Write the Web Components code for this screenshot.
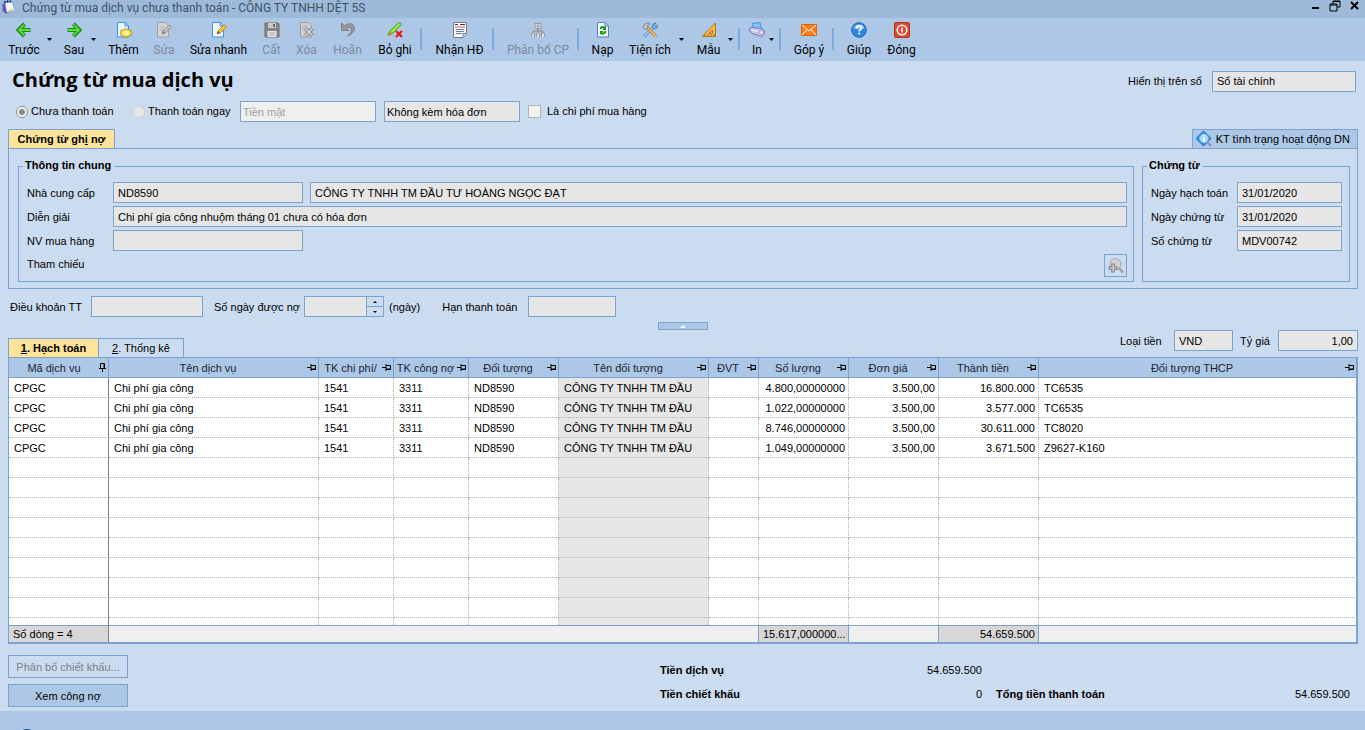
<!DOCTYPE html>
<html lang="vi">
<head>
<meta charset="utf-8">
<title>Chứng từ mua dịch vụ</title>
<style>
  html, body { margin: 0; }
  body {
    --line: #7ba2d0;
    --bar: #adc7e7;
    --page: #cbdbf0;
    --field: #e6e6e6;
    --ui: Roboto, "Open Sans", sans-serif;
    --head: "Open Sans", "Noto Sans", sans-serif;
    background: var(--page);
    color: #000;
    font: 11px/14px "Liberation Sans", Arial, sans-serif;
  }
</style>
</head>
<body>
<voucher-app></voucher-app>

<script>
const ICONS = {
  app: '<path d="M3 1h9l3 11-10 3L1 12z" fill="#3b5fc4"/><path d="M4 3l8-1 3 10-9 2z" fill="#f2f6ff" stroke="#8fa6d8" stroke-width=".6"/><path d="M1 5l3 9 2 1" stroke="#8a3fa8" stroke-width="1.4" fill="none"/><path d="M4 1v3M7 0v3M10 0v3" stroke="#223a80" stroke-width="1.2"/><path d="M8 11l4-1 1 2-4 1z" fill="#f3d36b"/>',
  back: '<path d="M14.500 8H3M8.500 2L2.500 8l6 6" fill="none" stroke="#158a18" stroke-width="4"/><path d="M14 8H3M8.300 2.600L3 8l5.300 5.400" fill="none" stroke="#5fdc36" stroke-width="1.800"/>',
  next: '<path d="M1.500 8H13M7.500 2l6 6-6 6" fill="none" stroke="#158a18" stroke-width="4"/><path d="M2 8h11M7.700 2.600L13 8l-5.300 5.400" fill="none" stroke="#5fdc36" stroke-width="1.800"/>',
  add: '<path d="M1.500.5h8l3 3V15h-11z" fill="#e8f4ff" stroke="#3f95dc"/><path d="M9 .5V4h3.500" fill="#a9d3f7" stroke="#3f95dc"/><path d="M5 8l2 .5L8 7h4l1 1.500L15 8v2l1 1-1 1v2l-2-.5L12 15H8l-1-1.500L5 14v-2l-1-1 1-1z" fill="#f7e04b" stroke="#b08a10" stroke-width=".8"/><ellipse cx="10" cy="11" rx="3" ry="2" fill="#fff59a"/>',
  edit: '<path d="M1.500.5h8l3 3V15h-11z" fill="#d4d4d4" stroke="#a0a0a0"/><path d="M3.500 5h5M3.500 8h4" stroke="#b0b0b0"/><path d="M6 12l1-3 6-6 2.500 2-6.500 6z" fill="#c4c4c4" stroke="#8c8c8c"/><path d="M6 12l1-3 2 2z" fill="#777"/>',
  quick: '<path d="M1.500.5h8l3 3V15h-11z" fill="#eef7ff" stroke="#3f95dc"/><path d="M9 .5V4h3.500" fill="#a9d3f7" stroke="#3f95dc"/><path d="M6 12l1-3 6-6 2.500 2-6.500 6z" fill="#f9c63a" stroke="#c08016"/><path d="M6 12l1-3 2 2z" fill="#5a6a7a"/>',
  save: '<path d="M1 1h13l1 1v13H1z" fill="#858585" stroke="#6d6d6d"/><path d="M4 1h8v5H4z" fill="#c9c9c9"/><path d="M9 2h2v3H9z" fill="#6d6d6d"/><path d="M3.500 9h9v6h-9z" fill="#e6e6e6"/><path d="M5 11h6M5 13h6" stroke="#aaa"/>',
  del: '<path d="M1.500.5h8l3 3V15h-11z" fill="#cfcfcf" stroke="#a0a0a0"/><path d="M3 4h5M3 7h3" stroke="#aaa"/><path d="M6.500 6.500l7 7M13.500 6.500l-7 7" stroke="#777" stroke-width="3.600"/><path d="M6.500 6.500l7 7M13.500 6.500l-7 7" stroke="#d0d0d0" stroke-width="1.800"/>',
  undo: '<path d="M1.500 1v7.500H9L6.500 6c3-1.500 6 0 4.500 3.500-.6 1.700-1.800 3-3.500 4.500 4.500-1.500 7.500-5 7-8.500C14 1 8 .5 4.500 3.800z" fill="#979797" stroke="#777" stroke-width=".8"/>',
  unpost: '<path d="M1 13l2-4L11.500.8q2-.6 3 1.600L6 11z" fill="#9be34b" stroke="#4c9e1a"/><path d="M.5 14l2.500-4.500L6 12z" fill="#c98a1d"/><path d="M9 9l6 6M15 9l-6 6" stroke="#f01010" stroke-width="2"/>',
  invoice: '<path d="M1.500.5h13v11l-3 4h-10z" fill="#fbfbfd" stroke="#7a7a86"/><path d="M3 2.500h3M8 2.500h5" stroke="#333"/><path d="M3 5h10" stroke="#e2896f" stroke-width="1.400"/><path d="M4 7.500h8M4 9.500h8M4 11.500h6" stroke="#5a7fb8"/><path d="M11 15v-3.500h3.500" fill="#ddd" stroke="#7a7a86"/>',
  split: '<path d="M5 1.500h6v5H5z" fill="#ddd" stroke="#999"/><path d="M8 2.500v3M6.500 4h3M8 7v3M3 11V9h10v2" stroke="#8a8a8a" fill="none"/><path d="M1.500 15v-4h3v4M6.500 15v-4h3v4M11.500 15v-4h3v4" fill="#ddd" stroke="#999"/>',
  reload: '<path d="M2.500.5h8l3 3V15h-11z" fill="#f3f8ff" stroke="#5b7fc0"/><path d="M10 .5V4h3.500" fill="#b9d0f2" stroke="#5b7fc0"/><path d="M5 7V5q3-2 5 0l1-1v4H7.500l1-1.500Q7 5.500 6.500 7z" fill="#129b12"/><path d="M11 9v2q-3 3-5 .8L5 13V9h3.500l-1 1.500q1.500.8 2-1.500z" fill="#129b12"/>',
  tools: '<path d="M2 14.500L12 5" stroke="#3f87cf" stroke-width="3"/><path d="M2 14.500L12 5" stroke="#a9d5fb" stroke-width="1.500"/><path d="M10 5l1-3 3-1-1.500 2 1 1.500L15.500 3l-.5 3-3 1z" fill="#7cbcf2" stroke="#2f6fb0" stroke-width=".7"/><path d="M5 5l9 9.500" stroke="#c57b1c" stroke-width="3"/><path d="M5 5l9 9.500" stroke="#f4c263" stroke-width="1.400"/><path d="M1 6l1-3.500L6 .8l2 1L5 4l1 2-2 1.500z" fill="#c4c4c4" stroke="#777" stroke-width=".8"/>',
  ruler: '<path d="M14.500 1v13.500H1z" fill="#f3ba48" stroke="#b27a14"/><path d="M11.500 8v3.500H8z" fill="#adc7e7" stroke="#b27a14"/><path d="M4 14v-2M7 14v-1.500M10 14v-1.500M13 14v-2" stroke="#7a4f05" stroke-width=".8"/>',
  print: '<path d="M3 1.500l8-1 1.500 6-8 1z" fill="#7cc4f2" stroke="#3c87c8" stroke-width=".8"/><path d="M.6 7q0-2 3-1.500l9 1q2.800.5 2.800 3.500T13 14.500q-2 0-5-1.500-5-1-6.800-3z" fill="#c6c2ec" stroke="#6f6bab" stroke-width=".9"/><path d="M2.500 8l6 1.500" stroke="#fff"/><circle cx="12.500" cy="10.500" r="2" fill="#e8e6fb" stroke="#8b87c4" stroke-width=".7"/>',
  mail: '<path d="M.5 2.500h15v11H.5z" fill="#f57c17" stroke="#e06400"/><path d="M1 3l7 6 7-6M1 13l5-5.500M15 13l-5-5.500" fill="none" stroke="#fff"/>',
  help: '<circle cx="8" cy="8" r="7.300" fill="#2f86df" stroke="#1d5fae"/><path d="M2.500 6a5.800 5 0 0 1 11 0q-5 3-11 0z" fill="#8fc6fa"/><path d="M5.800 6.200q0-2.400 2.300-2.400T10.400 6q0 1.200-1.200 1.800-1 .6-1 1.600" fill="none" stroke="#fff" stroke-width="1.500"/><circle cx="8.200" cy="11.600" r="1" fill="#fff"/>',
  close: '<rect x=".5" y=".5" width="15" height="15" rx="1.500" fill="#e0492f" stroke="#b5311c"/><circle cx="8" cy="8" r="4.800" fill="none" stroke="#fff" stroke-width="1.500"/><path d="M8 5.500v5" stroke="#fff" stroke-width="1.500"/>',
  check: '<path d="M7.500 0L15 7.500 7.500 15 0 7.500z" fill="#2a98e6" stroke="#1b74bd"/><circle cx="8" cy="7.500" r="4.200" fill="#a8dafa" stroke="#8fcdf6"/><path d="M8 6.500v4M8 4.200v1.400" stroke="#fff" stroke-width="1.800"/><path d="M11 11l4 4" stroke="#9a8ac8" stroke-width="2.200"/>',
  zoom: '<circle cx="7.500" cy="6" r="5.500" fill="#d2d2d2" stroke="#a6a6a6"/><path d="M11 10l4 4.500" stroke="#a0a0a0" stroke-width="2.600"/><path d="M5 5.500v9M.5 10h9" stroke="#858585" stroke-width="3.600"/><path d="M5 6.500v7M1.500 10h7" stroke="#cacaca" stroke-width="1.600"/>'
};
const svg = name => `<svg width="16" height="16" viewBox="0 0 16 16" aria-hidden="true">${ICONS[name]}</svg>`;

const BASE = `
  *, *::before, *::after { box-sizing: border-box; }
  button, input, select { font: inherit; color: inherit; margin: 0; border-radius: 0; }
  button { padding: 0; background: none; border: 0; white-space: nowrap; }
  svg { display: block; flex: none; }
`;

class Base extends HTMLElement {
  connectedCallback() {
    if (this.shadowRoot) return;
    this.attachShadow({ mode: 'open' }).innerHTML = `<style>${BASE}</style>${this.render()}`;
  }
}

customElements.define('title-bar', class extends Base {
  render() {
    return `<style>
      :host { display: flex; align-items: flex-start; justify-content: space-between; height: 18px;
              background: #9dbad9; color: #3f5269; font: 12px/16px var(--ui); }
      .name { display: flex; gap: 6px; white-space: nowrap; }
      .name svg { width: 15px; height: 14px; margin-left: 1px; }
      .ctl { display: flex; gap: 8px; padding-right: 4px; }
      .ctl button { width: 12px; height: 12px; }
    </style>
    <div class="name">${svg('app')}<span><slot></slot></span></div>
    <div class="ctl">
      <button aria-label="Thu nhỏ"><svg width="12" height="12"><path d="M3 8h7" stroke="#000" stroke-width="2"/></svg></button>
      <button aria-label="Khôi phục"><svg width="12" height="12"><path d="M4 4V1h7v6H8M4 1.500h7M1 4h7v7H1zM1 5h7" fill="none" stroke="#000"/></svg></button>
      <button aria-label="Đóng cửa sổ"><svg width="12" height="12"><path d="M2 2l7 7M9 2l-7 7" stroke="#000" stroke-width="2"/></svg></button>
    </div>`;
  }
});

customElements.define('tool-item', class extends Base {
  render() {
    const off = this.hasAttribute('disabled') ? 'disabled' : '';
    return `<style>
      :host { display: flex; flex: none; }
      button { display: flex; flex-direction: column; align-items: center; gap: 4px;
               width: var(--w, 45px); padding-top: 4px; }
      button:disabled { color: #7e8a99; }
      .more { width: 10px; padding: 20px 0 0; align-items: flex-start; }
    </style>
    <button ${off}>${svg(this.getAttribute('icon'))}<span><slot></slot></span></button>
    ${this.hasAttribute('menu') ? '<button class="more" aria-label="Mở trình đơn"><svg width="5" height="3"><path d="M0 0h5L2.500 3z"/></svg></button>' : ''}`;
  }
});

customElements.define('tool-bar', class extends Base {
  render() {
    const item = (icon, label, w, extra = '') => `<tool-item icon="${icon}" ${extra} style="--w:${w}px">${label}</tool-item>`;
    return `<style>
      :host { display: flex; height: 43px; padding-left: 1px; background: var(--bar);
              font: 12px/16px var(--ui); }
      i { flex: none; width: 7px; height: 22px; margin-top: 10px; border-left: 2px solid #80aadd; }
    </style>
    ${item('back', 'Trước', 46, 'menu')}${item('next', 'Sau', 34, 'menu')}${item('add', 'Thêm', 45)}
    ${item('edit', 'Sửa', 36, 'disabled')}${item('quick', 'Sửa nhanh', 73)}${item('save', 'Cất', 33, 'disabled')}
    ${item('del', 'Xóa', 37, 'disabled')}${item('undo', 'Hoãn', 45, 'disabled')}${item('unpost', 'Bỏ ghi', 50)}<i></i>
    ${item('invoice', 'Nhận HĐ', 65)}<i></i>${item('split', 'Phân bổ CP', 78, 'disabled')}<i></i>
    ${item('reload', 'Nạp', 37)}${item('tools', 'Tiện ích', 58, 'menu')}${item('ruler', 'Mẫu', 39, 'menu')}<i></i>
    ${item('print', 'In', 24, 'menu')}<i></i>${item('mail', 'Góp ý', 46)}<i></i>
    ${item('help', 'Giúp', 40)}${item('close', 'Đóng', 45)}`;
  }
});

/* A label and its box. --lw: label column, --bw: box width, kind: text | select */
customElements.define('form-field', class extends Base {
  render() {
    const value = this.getAttribute('value') || '';
    const label = this.getAttribute('label') || '';
    const hidden = this.getAttribute('hint') || '';
    const off = this.hasAttribute('disabled') ? 'disabled' : '';
    const aria = hidden ? `aria-label="${hidden}"` : '';
    const box = this.getAttribute('kind') === 'select'
      ? `<select id="f" ${aria} ${off}><option>${value}</option></select>`
      : `<input id="f" type="text" ${aria} value="${value}" readonly>`;
    return `<style>
      :host { display: flex; align-items: center; height: 21px; }
      label { flex: none; width: var(--lw, auto); white-space: nowrap; }
      input, select { appearance: none; flex: 1 1 auto; min-width: 0; width: var(--bw, 100%); height: 21px; padding: 0 4px;
        border: 1px solid var(--line); background: var(--field); outline: 0; text-align: var(--align, left); }
      :host([fixed]) input, :host([fixed]) select { flex: none; }
      :host([tight]) select { padding-left: 2px; }
      select:disabled { color: #a0a0a0; background: #efefef; opacity: 1; }
    </style>${label ? `<label for="f">${label}</label>` : ''}${box}`;
  }
});

customElements.define('spin-field', class extends Base {
  render() {
    return `<style>
      :host { display: flex; align-items: center; height: 21px; }
      label { width: 90px; }
      .box { display: flex; width: 80px; height: 21px; border: 1px solid var(--line); background: var(--field); }
      input { flex: 1; min-width: 0; border: 0; background: none; outline: 0; }
      .btns { display: flex; flex-direction: column; width: 17px; }
      .btns button { flex: 1; display: grid; place-items: center; background: var(--page); border-left: 1px solid var(--line); }
      .btns button + button { border-top: 1px solid var(--line); }
    </style>
    <label for="d">Số ngày được nợ</label>
    <div class="box"><input id="d" type="text" readonly>
      <div class="btns"><button aria-label="Tăng"><svg width="4" height="2"><path d="M0 2h4L2 0z"/></svg></button><button aria-label="Giảm"><svg width="4" height="2"><path d="M0 0h4L2 2z"/></svg></button></div>
    </div>`;
  }
});

customElements.define('group-box', class extends Base {
  render() {
    return `<style>
      :host { display: block; min-width: 0; }
      fieldset { margin: 0; min-width: 0; height: 100%; border: 1px solid var(--line); padding: 9px var(--pr, 6px) 4px 8px; }
      legend { margin-left: -4px; padding: 0 3px 0 2px; font-weight: bold; height: 14px; line-height: 12px; }
      div { display: flex; flex-direction: column; gap: 3px; }
    </style>
    <fieldset><legend>${this.getAttribute('legend')}</legend><div><slot></slot></div></fieldset>`;
  }
});

customElements.define('voucher-head', class extends Base {
  render() {
    return `<style>
      :host { display: block; padding: 0 9px 0 12px; }
      .top { display: flex; justify-content: space-between; align-items: center; height: 40px; }
      h1 { align-self: flex-start; margin: 0; font: bold 20px/38px var(--head); }
      .opts { display: flex; align-items: center; height: 21px; padding-left: 4px; }
      label { white-space: nowrap; line-height: 13px; }
      .a { width: 105px; padding-left: 3px; } .b { width: 95px; padding-left: 3px; }
      input { appearance: none; flex: none; width: 13px; height: 13px; border: 1px solid #b4b4b4; background: #f2f2f2; }
      input[type=radio] { width: 12px; height: 12px; border-radius: 50%; }
      input[type=radio]:checked { border-color: #8e8e8e; background: radial-gradient(circle, #888 0 2px, #b4b4b4 3px, #fff 4px); }
      input[type=radio]:not(:checked) { border-color: #d0d0d0; background: #e8e8e8; }
      form-field + form-field { margin: 0 8px; }
      .c { padding-left: 6px; }
    </style>
    <div class="top"><h1>Chứng từ mua dịch vụ</h1>
      <form-field fixed kind="select" label="Hiển thị trên sổ" value="Sổ tài chính" style="--lw:84px;--bw:144px"></form-field></div>
    <div class="opts">
      <input type="radio" id="r1" name="pay" checked disabled><label class="a" for="r1">Chưa thanh toán</label>
      <input type="radio" id="r2" name="pay" disabled><label class="b" for="r2">Thanh toán ngay</label>
      <form-field fixed tight kind="select" hint="Phương thức" value="Tiền mặt" disabled style="--bw:136px"></form-field>
      <form-field fixed tight kind="select" hint="Hóa đơn" value="Không kèm hóa đơn" style="--bw:136px"></form-field>
      <input type="checkbox" id="c1" disabled><label class="c" for="c1">Là chi phí mua hàng</label>
    </div>`;
  }
});

customElements.define('debit-panel', class extends Base {
  render() {
    return `<style>
      :host { display: block; margin: 7px 7px 0 8px; }
      .tabs { display: flex; justify-content: space-between; height: 19px; }
      .tabs button { height: 20px; border: 1px solid var(--line); }
      .on { width: 107px; background: #ffe39b; border-bottom-color: #ffe39b; font-weight: bold; z-index: 1; }
      .kt { display: flex; align-items: center; gap: 4px; padding: 0 7px 0 3px; background: var(--bar); }
      .panel { display: grid; grid-template-columns: 1fr 208px; gap: 8px; padding: 10px 7px 6px 9px; border: 1px solid var(--line); }
      form-field { --lw: 86px; }
      .pair { display: flex; gap: 7px; }
      .pair form-field:last-child { flex: 1; }
      .ref { display: flex; justify-content: space-between; height: 23px; line-height: 21px; }
      .ref button { display: grid; place-items: center; width: 23px; height: 23px; border: 1px solid var(--line); }
    </style>
    <div class="tabs" role="tablist"><button class="on" role="tab">Chứng từ gh<u>i</u> nợ</button>
      <button class="kt">${svg('check')}KT tình trạng hoạt động DN</button></div>
    <div class="panel">
      <group-box legend="Thông tin chung">
        <div class="pair"><form-field fixed label="Nhà cung cấp" value="ND8590" style="--bw:190px"></form-field>
          <form-field hint="Tên nhà cung cấp" value="CÔNG TY TNHH TM ĐẦU TƯ HOÀNG NGỌC ĐẠT"></form-field></div>
        <form-field label="Diễn giải" value="Chi phí gia công nhuộm tháng 01 chưa có hóa đơn"></form-field>
        <form-field fixed label="NV mua hàng" style="--bw:190px"></form-field>
        <div class="ref"><span>Tham chiếu</span><button aria-label="Tìm tham chiếu">${svg('zoom')}</button></div>
      </group-box>
      <group-box legend="Chứng từ" style="--pr:7px">
        <form-field label="Ngày hạch toán" value="31/01/2020"></form-field>
        <form-field label="Ngày chứng từ" value="31/01/2020"></form-field>
        <form-field label="Số chứng từ" value="MDV00742"></form-field>
      </group-box>
    </div>`;
  }
});

customElements.define('terms-row', class extends Base {
  render() {
    return `<style>
      :host { display: block; padding: 7px 9px 0; }
      .row { display: flex; align-items: center; gap: 11px; padding-left: 1px; }
      .unit { margin: 0 11px 0 -6px; }
      .fold { display: grid; place-items: center; width: 50px; height: 8px; margin: 5px auto 0; background: var(--bar); border: 1px solid var(--line); }
    </style>
    <div class="row">
      <form-field fixed label="Điều khoản TT" style="--lw:81px;--bw:112px"></form-field>
      <spin-field></spin-field><span class="unit">(ngày)</span>
      <form-field fixed label="Hạn thanh toán" style="--lw:86px;--bw:88px"></form-field>
    </div>
    <button class="fold" aria-label="Thu gọn"><svg width="6" height="3"><path d="M0 3h6L3 0z" fill="#fff"/></svg></button>`;
  }
});

customElements.define('detail-grid', class extends Base {
  render() {
    const pin = '<svg class="pin" width="9" height="7" viewBox="0 0 9 7"><path d="M0 3.500h4M4 0v7M4 1.500h4.500v4H4M4 5h4.500" fill="none" stroke="#000"/></svg>';
    const pinned = '<svg class="pin" width="7" height="9" viewBox="0 0 7 9"><path d="M1.500 5V.5h4V5M0 5.500h7M3.500 5v4M5 1v4" fill="none" stroke="#000"/></svg>';
    const cols = [['Mã dịch vụ', 100], ['Tên dịch vụ', 210], ['TK chi phí/', 75], ['TK công nợ', 75], ['Đối tượng', 90],
      ['Tên đối tượng', 150], ['ĐVT', 50], ['Số lượng', 90], ['Đơn giá', 90], ['Thành tiền', 100], ['Đối tượng THCP', 0]];
    const lines = [['4.800,00000000', '16.800.000', 'TC6535'], ['1.022,00000000', '3.577.000', 'TC6535'],
      ['8.746,00000000', '30.611.000', 'TC8020'], ['1.049,00000000', '3.671.500', 'Z9627-K160']];
    const full = lines.map(([q, t, c]) => ['CPGC', 'Chi phí gia công', '1541', '3311', 'ND8590', 'CÔNG TY TNHH TM ĐẦU', '', q, '3.500,00', t, c]);
    const row = (r, cls = '') => `<tr class="${cls}">${r.map(v => `<td>${v}</td>`).join('')}</tr>`;
    const blank = Array(11).fill('');
    return `<style>
      :host { display: block; margin: 0 7px 0 8px; }
      .bar { display: flex; justify-content: space-between; align-items: flex-end; height: 27px; }
      .tabs { display: flex; }
      .tabs button { height: 19px; border: 1px solid var(--line); border-bottom: 0; width: 86px; margin-left: -1px; }
      .tabs .on { width: 91px; margin: 0; background: #ffe39b; font-weight: bold; }
      .cur { display: flex; gap: 7px; align-self: flex-start; }
      table { width: 100%; table-layout: fixed; border-collapse: separate; border-spacing: 0; background: #fff;
              border: 1px solid var(--line); border-bottom-width: 2px; }
      th { height: 20px; padding: 0 2px 0 0; background: var(--bar); font-weight: normal;
           border-right: 1px solid var(--line); border-bottom: 1px solid var(--line); }
      th div { display: flex; align-items: center; }
      th span { flex: 1; white-space: nowrap; overflow: hidden; text-align: center; color: #1c2430; }
      td { height: 20px; padding: 0 3px 0 5px; overflow: hidden; white-space: nowrap;
           border-right: 1px dotted #b4b4b4; border-bottom: 1px dotted #b4b4b4; }
      tbody td:first-child, tfoot td:first-child { border-right: 1px solid #808080; }
      tbody td:nth-child(6) { background: #e6e6e6; }
      tbody td:nth-child(n+8):nth-child(-n+10) { text-align: right; }
      .part td { height: 7px; border-bottom: 0; }
      tfoot td { height: 17px; line-height: 13px; background: #efefef; border: 0 solid var(--line); border-top-width: 1px; border-right-width: 1px; padding: 0 3px 0 4px; }
      tfoot .sum { background: #d7d7d7; text-align: right; }
      tfoot td:first-child { background: #d7d7d7; }
      th:last-child, td:last-child { border-right-style: solid; border-right-color: var(--line); }
    </style>
    <div class="bar">
      <div class="tabs" role="tablist"><button class="on" role="tab"><u>1</u>. Hạch toán</button><button role="tab"><u>2</u>. Thống kê</button></div>
      <div class="cur"><form-field fixed kind="select" label="Loại tiền" value="VND" style="--lw:54px;--bw:59px"></form-field>
        <form-field fixed label="Tỷ giá" value="1,00" style="--lw:38px;--bw:80px;--align:right"></form-field></div>
    </div>
    <table>
      <colgroup>${cols.map(c => `<col${c[1] ? ` style="width:${c[1]}px"` : ''}>`).join('')}</colgroup>
      <thead><tr>${cols.map((c, i) => `<th><div><span>${c[0]}</span>${i ? pin : pinned}</div></th>`).join('')}</tr></thead>
      <tbody>${full.map(r => row(r)).join('')}${row(blank).repeat(8)}${row(blank, 'part')}</tbody>
      <tfoot><tr><td>Số dòng = 4</td><td colspan="6"></td><td class="sum">15.617,000000...</td><td></td><td class="sum">54.659.500</td><td></td></tr></tfoot>
    </table>`;
  }
});

customElements.define('summary-area', class extends Base {
  render() {
    return `<style>
      :host { display: flex; justify-content: space-between; padding: 11px 15px 4px 8px; }
      .btns { display: flex; flex-direction: column; gap: 6px; }
      .btns button { width: 120px; height: 23px; border: 1px solid var(--line); background: var(--bar); }
      .btns button:disabled { background: none; color: #808080; }
      .sum { display: grid; grid-template-columns: 322px 354px; column-gap: 14px; grid-auto-rows: 24px; align-items: center; padding-top: 3px; }
      .sum div { display: flex; justify-content: space-between; }
    </style>
    <div class="btns"><button disabled>Phân bổ chiết khấu...</button><button>Xem công nợ</button></div>
    <div class="sum"><div><b>Tiền dịch vụ</b><span>54.659.500</span></div><div></div>
      <div><b>Tiền chiết khấu</b><span>0</span></div><div><b>Tổng tiền thanh toán</b><span>54.659.500</span></div></div>`;
  }
});

customElements.define('status-strip', class extends Base {
  render() {
    return `<style>
      :host { display: block; box-sizing: border-box; flex: 1 0 19px; height: 19px; overflow: hidden;
              background: var(--bar); padding: 18px 0 0 18px; }
      i { display: block; width: 18px; height: 18px; margin-bottom: -18px; border-radius: 50%; background: #1f4f82; }
    </style><i></i>`;
  }
});

customElements.define('voucher-app', class extends Base {
  render() {
    return `<style>:host { display: flex; flex-direction: column; min-height: 100vh; }</style>
    <title-bar>Chứng từ mua dịch vụ chưa thanh toán - CÔNG TY TNHH DỆT 5S</title-bar>
    <tool-bar></tool-bar>
    <voucher-head></voucher-head>
    <debit-panel></debit-panel>
    <terms-row></terms-row>
    <detail-grid></detail-grid>
    <summary-area></summary-area>
    <status-strip></status-strip>`;
  }
});
</script>
</body>
</html>
